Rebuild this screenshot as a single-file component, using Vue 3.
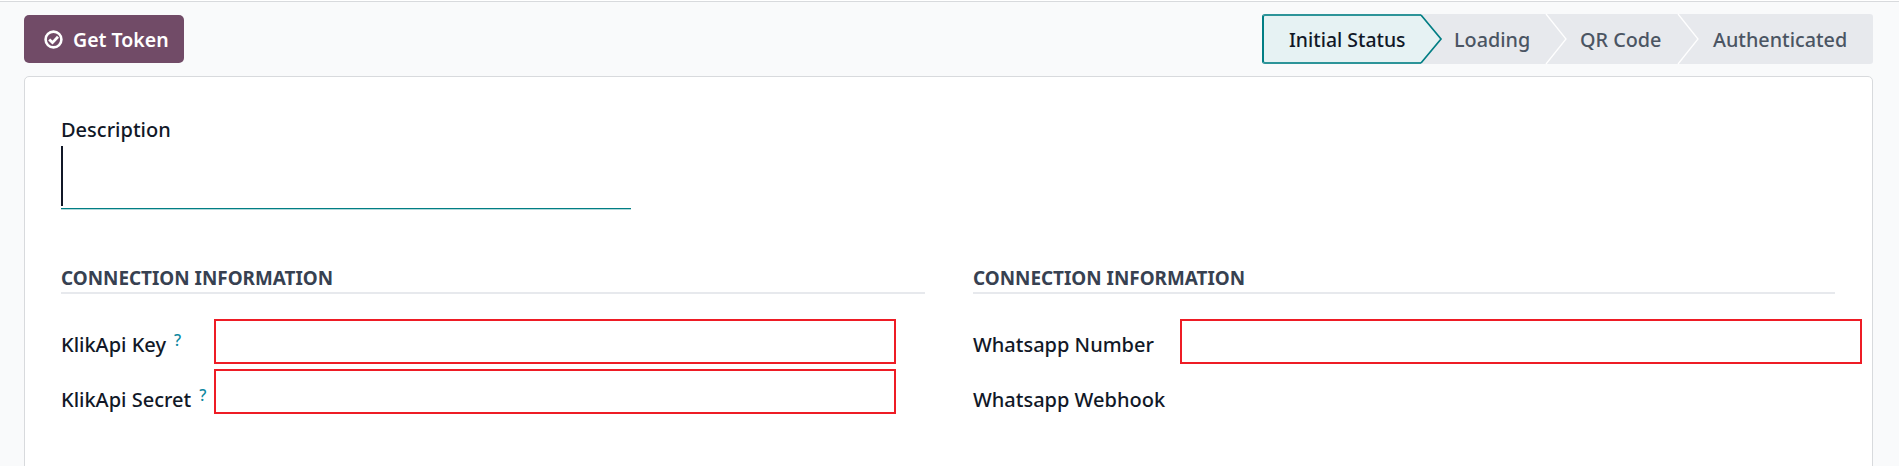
<script setup>
const steps = [
  { label: 'Initial Status', cls: 's1' },
  { label: 'Loading', cls: 's2' },
  { label: 'QR Code', cls: 's3' },
  { label: 'Authenticated', cls: 's4' }
]
</script>

<template>
  <div class="page">
    <div class="topbar">
      <button class="btn" type="button">
        <svg class="btn-ico" viewBox="0 0 19 19" width="19" height="19">
          <circle cx="9.5" cy="9.5" r="7.9" fill="none" stroke="#fff" stroke-width="2.6" />
          <path d="M5.2 9.4 L8.5 12.6 L14 6.8" fill="none" stroke="#fff" stroke-width="2.8" />
        </svg>
        <span>Get Token</span>
      </button>
      <div class="status">
        <div v-for="(s, i) in steps" :key="s.label" class="step" :class="[s.cls, { active: i === 0 }]">
          <span>{{ s.label }}</span>
          <svg v-if="i === 0" class="arrow" viewBox="0 0 21 50" preserveAspectRatio="none">
            <path d="M0 1 L20 25 L0 49" fill="#e6f2f3" stroke="#017e84" stroke-width="1.7" />
          </svg>
          <svg v-else-if="i < 3" class="arrow" viewBox="0 0 21 50" preserveAspectRatio="none">
            <path d="M0 0 L20 25 L0 50" fill="#e7e9ed" stroke="#fff" stroke-width="1.3" />
          </svg>
        </div>
      </div>
    </div>

    <div class="card">
      <label class="desc-label">Description</label>
      <div class="desc-field"><i class="caret"></i></div>

      <div class="groups">
        <section class="group left">
          <h3 class="sep">CONNECTION INFORMATION</h3>
          <div class="row">
            <div class="lbl">KlikApi Key<sup>?</sup></div>
            <div class="inp"></div>
          </div>
          <div class="row r2">
            <div class="lbl">KlikApi Secret<sup>?</sup></div>
            <div class="inp"></div>
          </div>
        </section>
        <section class="group right">
          <h3 class="sep">CONNECTION INFORMATION</h3>
          <div class="row">
            <div class="lbl">Whatsapp Number</div>
            <div class="inp"></div>
          </div>
          <div class="row r2">
            <div class="lbl">Whatsapp Webhook</div>
          </div>
        </section>
      </div>
    </div>
  </div>
</template>

<style>
html, body { margin: 0; background: #f9fafb; overflow: hidden; }
</style>

<style scoped>
.page {
  width: 1899px;
  height: 466px;
  box-sizing: border-box;
  background: #f9fafb;
  border-top: 1px solid #fff;
  font-family: "Noto Sans", "Open Sans", sans-serif;
  color: #111827;
  overflow: hidden;
}
.topbar {
  border-top: 1px solid #d8dadd;
  display: flex;
  justify-content: space-between;
  align-items: flex-start;
  padding: 12px 26px 12px 24px;
}
.btn {
  width: 160px;
  height: 48px;
  margin-top: 1px;
  border: 0;
  border-radius: 5px;
  background: #714b67;
  color: #fff;
  font: 600 19.5px "Noto Sans", sans-serif;
  display: flex;
  align-items: center;
  gap: 10px;
  padding: 0 0 0 20px;
  white-space: nowrap;
}
.btn-ico { flex: none; }
.status {
  display: flex;
  height: 50px;
  background: #e7e9ed;
  border-radius: 3px;
  font-size: 19.8px;
  font-weight: 500;
  color: #4b5563;
  white-space: nowrap;
}
.step {
  position: relative;
  box-sizing: border-box;
  display: flex;
  align-items: center;
}
.step.s1 {
  width: 159px;
  height: 50px;
  padding-left: 25px;
  font-size: 19.4px;
  background: #e6f2f3;
  border: solid #017e84;
  border-width: 2px 0 2px 2px;
  border-top-color: #2d9499;
  border-bottom-color: #2d9499;
  border-radius: 3px 0 0 3px;
  color: #111827;
}
.step.s2 { width: 125px; padding-left: 33px; }
.step.s3 { width: 132px; padding-left: 34px; }
.step.s4 { width: 195px; padding-left: 35px; }
.arrow {
  position: absolute;
  left: 100%;
  top: 0;
  width: 21px;
  height: 50px;
  overflow: visible;
  z-index: 1;
}
.active .arrow { top: -2px; }
.card {
  margin: 0 26px 0 24px;
  height: 400px;
  box-sizing: border-box;
  background: #fff;
  border: 1px solid #d8dadd;
  border-radius: 5px;
  padding: 38px 36px 0;
}
.desc-label {
  display: block;
  font-size: 20px;
  font-weight: 500;
  line-height: 30px;
}
.desc-field {
  width: 570px;
  height: 62px;
  padding-top: 1px;
  border-bottom: 1px solid #017e84;
  box-shadow: 0 1px 0 rgba(1, 126, 132, 0.3);
}
.caret {
  display: block;
  width: 2px;
  height: 60px;
  background: #111827;
}
.groups {
  display: flex;
  gap: 48px;
  margin-top: 55px;
}
.group { box-sizing: border-box; }
.group.left { width: 864px; }
.group.right { width: 862px; }
.sep {
  margin: 0;
  font-size: 18.9px;
  font-weight: 700;
  line-height: 28px;
  color: #374151;
  border-bottom: 2px solid #e7e9ed;
}
.row {
  display: flex;
  align-items: flex-start;
  margin-top: 25px;
  font-size: 20px;
  font-weight: 500;
  height: 45px;
}
.row.r2 { margin-top: 5px; }
.lbl {
  width: 153px;
  flex: none;
  white-space: nowrap;
  line-height: 28px;
  padding-top: 12px;
}
.r2 .lbl { padding-top: 17px; }
.right .lbl { width: 207px; }
.lbl sup {
  font-size: 16px;
  font-weight: 500;
  color: #0c87a0;
  margin-left: 8px;
  line-height: 0;
  vertical-align: 6px;
}
.inp {
  width: 682px;
  height: 45px;
  box-sizing: border-box;
  border: 2px solid #ee1c25;
  flex: none;
}
</style>
